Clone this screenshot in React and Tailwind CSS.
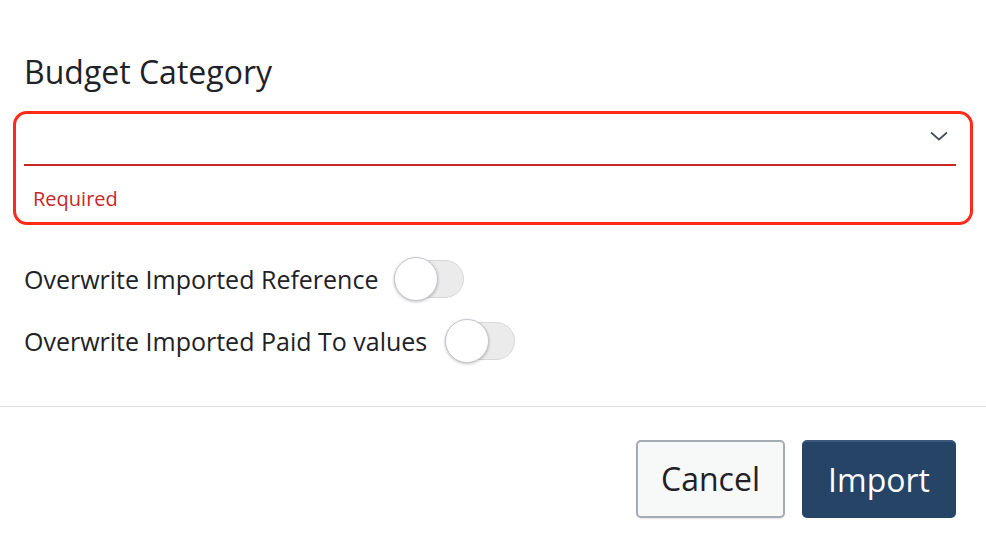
import React from "react";

function Toggle() {
    return (
        <span className="relative inline-flex items-center w-[70px] h-[44px] shrink-0">
            <span className="absolute left-0 right-0 top-[3px] bottom-[3px] rounded-full bg-[#ebebeb] border border-[#d6d8dc]"></span>
            <span className="absolute left-0 top-0 w-[44px] h-[44px] rounded-full bg-white border border-[#c3c7cc] shadow-[0_1px_3px_rgba(0,0,0,0.25)]"></span>
        </span>
    );
}

export default function App() {
    return (
        <div className="w-[986px] h-[546px] bg-white overflow-hidden font-['Open_Sans',sans-serif] text-[#1e2226]">
            <div className="px-6 pt-[51px]">
                <h2 className="text-[32px] leading-[42px]">Budget Category</h2>

                <div className="mt-[18px] -ml-[11px] -mr-[11px] border-[3px] border-[#ff2a1a] rounded-[14px] pl-[8px] pr-[14px]">
                    <div className="h-[52px] flex items-center justify-end border-b-2 border-[#c62828] pr-[8px]">
                        <svg width="18" height="10" viewBox="0 0 18 10" fill="none" className="mt-[-6px]">
                            <path d="M1 1.5 L9 8.5 L17 1.5" stroke="#4a525a" strokeWidth="1.8" />
                        </svg>
                    </div>
                    <p className="pt-[20px] pb-[10px] pl-[9px] text-[20px] leading-[26px] text-[#c62828]">Required</p>
                </div>

                <div className="mt-[32px] flex items-center gap-4 h-[44px]">
                    <span className="text-[25px] leading-[32px]">Overwrite Imported Reference</span>
                    <Toggle />
                </div>
                <div className="mt-[18px] flex items-center gap-[18px] h-[44px]">
                    <span className="text-[25px] leading-[32px]">Overwrite Imported Paid To values</span>
                    <Toggle />
                </div>
            </div>

            <div className="mt-[43px] border-t border-[#d5e0da]"></div>

            <div className="mt-[33px] flex justify-end gap-[17px] pr-[30px]">
                <button className="w-[149px] h-[78px] rounded-[5px] border-2 border-[#a3abb3] bg-[#f7f8f8] text-[32px] text-[#1e2226] shadow-[0_1px_2px_rgba(0,0,0,0.1)]">
                    Cancel
                </button>
                <button className="w-[154px] h-[78px] rounded-[5px] bg-[#264466] text-[32px] text-white border-t-2 border-[#3b5878]">
                    Import
                </button>
            </div>
        </div>
    );
}
